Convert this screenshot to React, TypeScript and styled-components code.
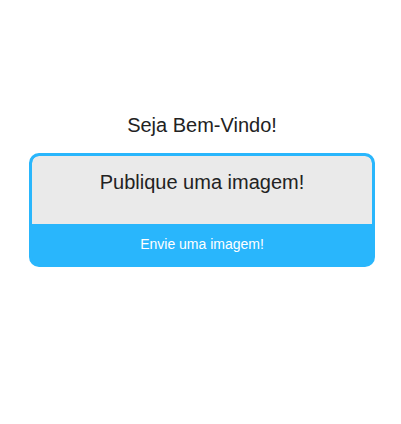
import React from 'react';
import styled, { createGlobalStyle } from 'styled-components';

const GlobalStyle = createGlobalStyle`
  body {
    margin: 0;
    background-color: #ffffff;
    font-family: 'Liberation Sans', Arial, sans-serif;
  }
`;

const App = () => {
  return (
    <>
      <GlobalStyle />
      <StPage>
        <StTitle>Seja Bem-Vindo!</StTitle>
        <StUploadCard>
          <StUploadPreview>
            <p>Publique uma imagem!</p>
          </StUploadPreview>
          <StUploadBtn type="button">Envie uma imagem!</StUploadBtn>
        </StUploadCard>
      </StPage>
    </>
  );
};

export default App;

const StPage = styled.main`
  display: flex;
  flex-direction: column;
  align-items: center;

  width: 100%;
  padding: 114px 0 0 3px;
  box-sizing: border-box;
`;

const StTitle = styled.h1`
  margin: 0 0 16px;

  font-size: 20px;
  font-weight: 400;
  line-height: 23px;
  color: #222222;
`;

const StUploadCard = styled.section`
  display: flex;
  flex-direction: column;

  width: 346px;
  border: 3px solid #29b6fc;
  border-radius: 10px;
  box-sizing: border-box;
  overflow: hidden;

  background-color: #29b6fc;
`;

const StUploadPreview = styled.div`
  display: flex;
  justify-content: center;

  height: 68px;
  background-color: #eaeaea;
  border-radius: 7px 7px 0 0;

  & > p {
    margin: 15px 0 0;

    font-size: 20px;
    line-height: 23px;
    color: #222222;
  }
`;

const StUploadBtn = styled.button`
  height: 40px;
  padding: 0;
  border: none;

  background-color: #29b6fc;

  font-family: 'Liberation Sans', Arial, sans-serif;
  font-size: 14px;
  color: #ffffff;
  cursor: pointer;
`;
